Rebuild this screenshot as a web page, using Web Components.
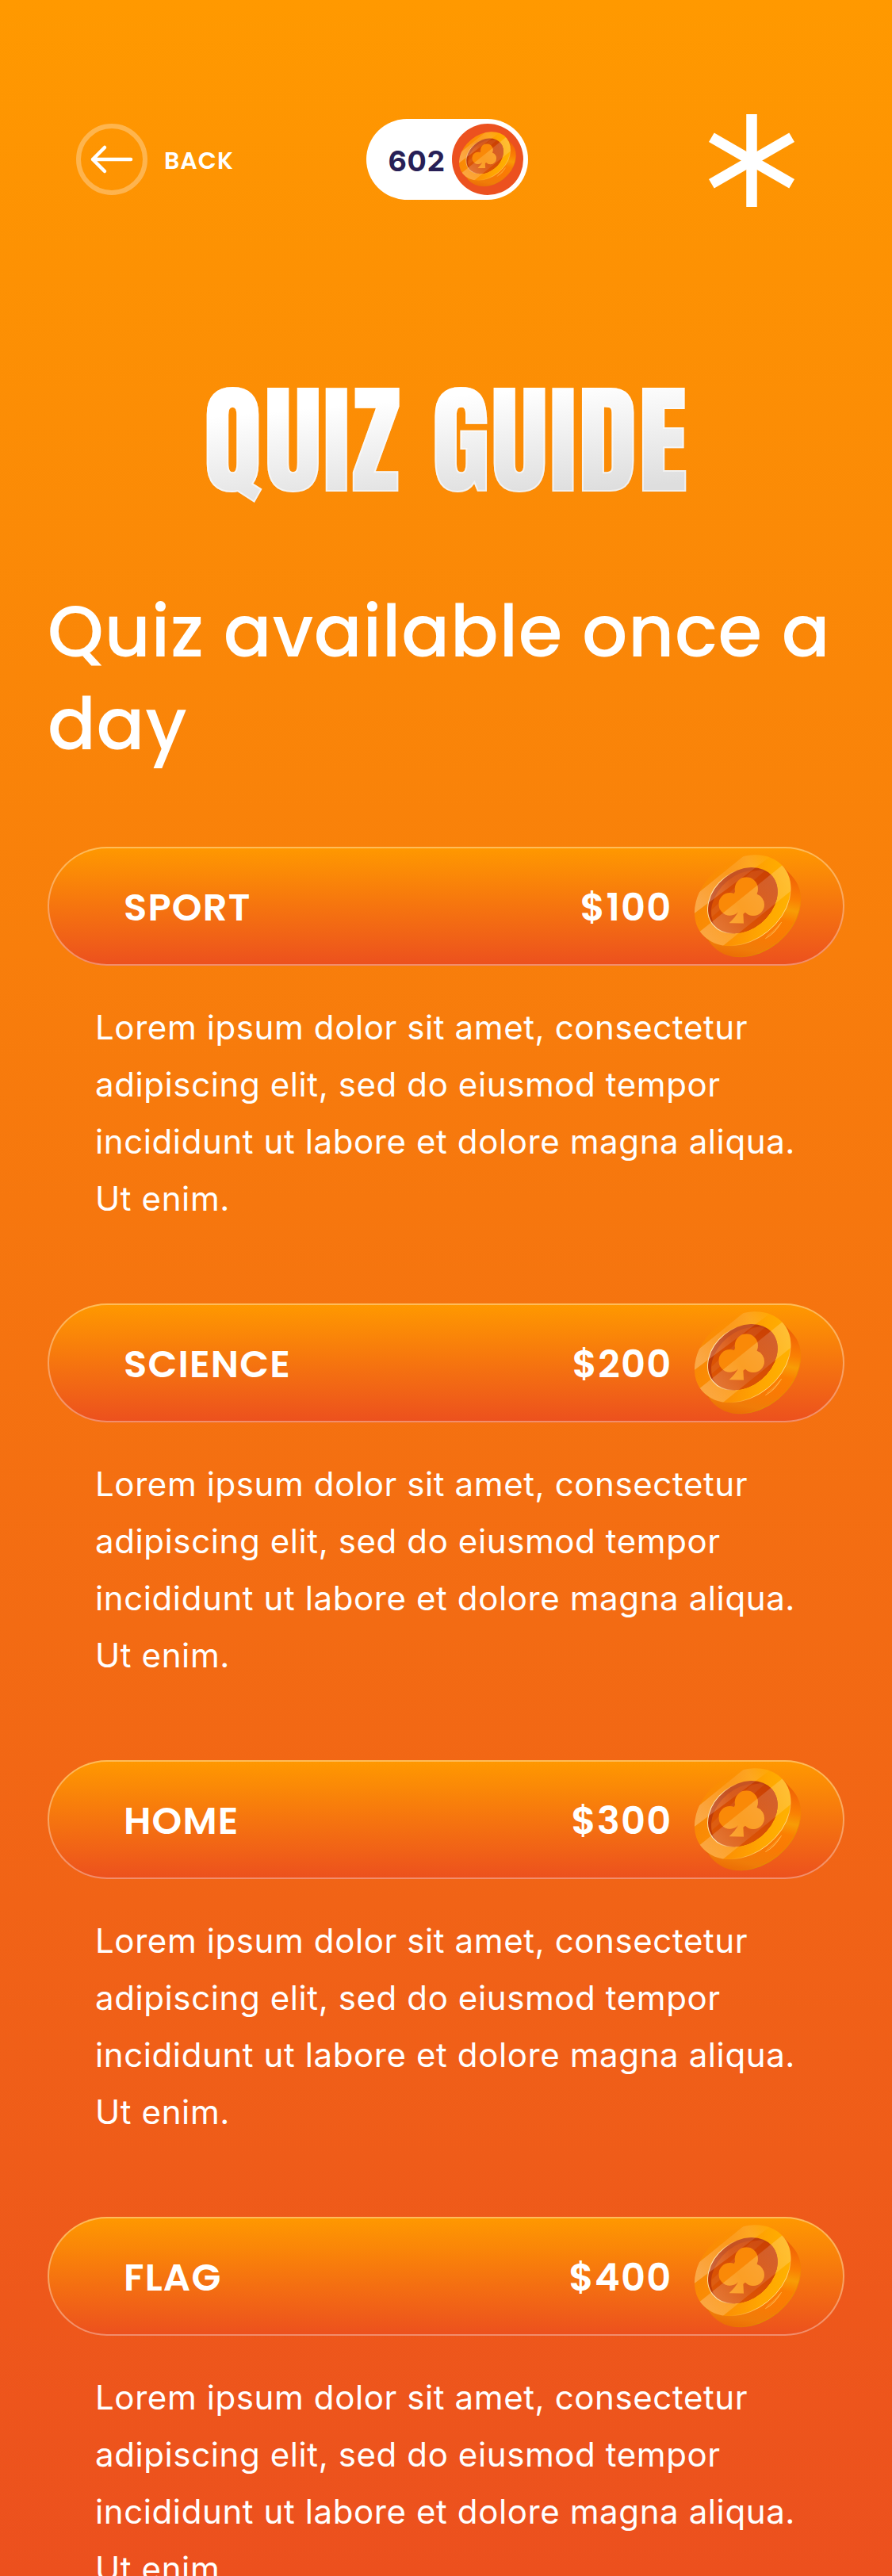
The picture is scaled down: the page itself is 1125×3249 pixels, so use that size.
<!DOCTYPE html>
<html lang="en">
<head>
<meta charset="utf-8">
<title>Quiz Guide</title>
<style>
  html, body { margin: 0; padding: 0; }
  body { font-family: Poppins, "Open Sans", sans-serif; color: #fff; }
</style>
</head>
<body>
<quiz-page>
  <quiz-header slot="header">
    <back-button>BACK</back-button>
    <coin-balance>602</coin-balance>
    <star-mark></star-mark>
  </quiz-header>
  <page-title slot="title">QUIZ GUIDE</page-title>
  <page-lead slot="lead">Quiz available once a day</page-lead>
  <quiz-card name="SPORT" prize="$100">Lorem ipsum dolor sit amet, consectetur adipiscing elit, sed do eiusmod tempor incididunt ut labore et dolore magna aliqua. Ut enim.</quiz-card>
  <quiz-card name="SCIENCE" prize="$200">Lorem ipsum dolor sit amet, consectetur adipiscing elit, sed do eiusmod tempor incididunt ut labore et dolore magna aliqua. Ut enim.</quiz-card>
  <quiz-card name="HOME" prize="$300">Lorem ipsum dolor sit amet, consectetur adipiscing elit, sed do eiusmod tempor incididunt ut labore et dolore magna aliqua. Ut enim.</quiz-card>
  <quiz-card name="FLAG" prize="$400">Lorem ipsum dolor sit amet, consectetur adipiscing elit, sed do eiusmod tempor incididunt ut labore et dolore magna aliqua. Ut enim.</quiz-card>
</quiz-page>
<script>
const define = (name, html, setup) => customElements.define(name, class extends HTMLElement {
  constructor() {
    super();
    this.attachShadow({ mode: 'open' }).innerHTML = html;
  }
  connectedCallback() { if (setup) setup(this); }
});

define('club-coin', `
<style>
  :host { display: block; flex: none; width: 134.67px; height: 129.33px; }
  svg { display: block; width: 100%; height: 100%; overflow: visible; }
</style>
<svg viewBox="48 53 404 388" aria-hidden="true">
  <defs>
    <linearGradient id="rim" gradientUnits="userSpaceOnUse" x1="110" y1="400" x2="440" y2="130">
      <stop offset="0" stop-color="#e96304"/><stop offset=".14" stop-color="#f07c08"/>
      <stop offset=".32" stop-color="#fa7a04"/><stop offset=".46" stop-color="#fb7f02"/>
      <stop offset=".56" stop-color="#f89c05"/><stop offset=".66" stop-color="#fa8003"/>
      <stop offset=".8" stop-color="#f56c05"/><stop offset=".92" stop-color="#ea5f06"/>
      <stop offset="1" stop-color="#e35808"/>
    </linearGradient>
    <linearGradient id="rimEdge" gradientUnits="userSpaceOnUse" x1="120" y1="400" x2="440" y2="150">
      <stop offset="0" stop-color="#e07a00" stop-opacity="0"/><stop offset=".3" stop-color="#e09000"/>
      <stop offset=".75" stop-color="#e88e00"/><stop offset="1" stop-color="#e88000" stop-opacity="0"/>
    </linearGradient>
    <linearGradient id="face" gradientUnits="userSpaceOnUse" x1="90" y1="100" x2="345" y2="350">
      <stop offset="0" stop-color="#f98805"/><stop offset=".4" stop-color="#fc9003"/>
      <stop offset=".75" stop-color="#ffa601"/><stop offset="1" stop-color="#ffb000"/>
    </linearGradient>
    <linearGradient id="well" gradientUnits="userSpaceOnUse" x1="120" y1="260" x2="350" y2="180">
      <stop offset="0" stop-color="#dc5504"/><stop offset=".5" stop-color="#d84e04"/><stop offset="1" stop-color="#cc4203"/>
    </linearGradient>
    <linearGradient id="glossA" gradientUnits="userSpaceOnUse" x1="60" y1="230" x2="340" y2="60">
      <stop offset="0" stop-color="#fff" stop-opacity=".26"/><stop offset=".45" stop-color="#fff" stop-opacity=".1"/>
      <stop offset=".75" stop-color="#fff" stop-opacity=".12"/><stop offset="1" stop-color="#fff" stop-opacity="0"/>
    </linearGradient>
    <linearGradient id="glossB" gradientUnits="userSpaceOnUse" x1="90" y1="370" x2="400" y2="130">
      <stop offset="0" stop-color="#fff" stop-opacity=".24"/><stop offset=".45" stop-color="#fff" stop-opacity=".08"/>
      <stop offset=".8" stop-color="#fff" stop-opacity=".15"/><stop offset="1" stop-color="#fff" stop-opacity=".2"/>
    </linearGradient>
    <linearGradient id="lip" gradientUnits="userSpaceOnUse" x1="150" y1="180" x2="250" y2="270">
      <stop offset="0" stop-color="#ffe0a0"/><stop offset=".5" stop-color="#ffd080" stop-opacity="0"/>
    </linearGradient>
    <linearGradient id="faceEdge" gradientUnits="userSpaceOnUse" x1="180" y1="400" x2="415" y2="170">
      <stop offset="0" stop-color="#ffdf9a" stop-opacity="0"/><stop offset=".35" stop-color="#ffdf9a"/>
      <stop offset=".8" stop-color="#ffdf9a"/><stop offset="1" stop-color="#ffdf9a" stop-opacity="0"/>
    </linearGradient>
    <clipPath id="faceClip"><ellipse cx="230" cy="226" rx="200" ry="151" transform="rotate(-39 230 226)"/></clipPath>
    <clipPath id="wellClip"><ellipse cx="230" cy="226" rx="145" ry="110" transform="rotate(-39 230 226)"/></clipPath>
    <clipPath id="clubClip">
      <circle cx="244" cy="182" r="44"/><circle cx="182" cy="240" r="43"/><circle cx="270" cy="242" r="42"/>
      <path d="M201 192 286 192 275 245 232 277 234 313 179 312Q204 288 213 270L185 230Z"/>
    </clipPath>
  </defs>
  <g fill="url(#rim)">
    <path d="M78.700 356.600 116.700 398.600 419.300 137.400 381.300 95.400Z"/>
    <ellipse cx="268" cy="268" rx="200" ry="151" transform="rotate(-39 268 268)"/>
  </g>
  <path d="M112.600 393.900a200 151 -39 0 0 310.800 -251.800" fill="none" stroke="url(#rimEdge)" stroke-width="3"/>
  <path d="M316 370Q348 352 377 308Q352 352 316 370Z" fill="#ffd98c" stroke="#ffd070" stroke-width="1.500" opacity=".75"/>
  <path d="M322 361Q350 341 372 314" fill="none" stroke="#ffc04a" stroke-width="3" opacity=".5"/>
  <ellipse cx="230" cy="226" rx="200" ry="151" transform="rotate(-39 230 226)" fill="url(#face)"/>
  <g clip-path="url(#wellClip)">
    <rect x="80" y="90" width="300" height="280" fill="#bf3d08"/>
    <ellipse cx="243" cy="237" rx="145" ry="110" transform="rotate(-39 243 237)" fill="url(#well)"/>
    <path d="M112 262 262 118 330 100 112 290Z" fill="#fff" opacity=".06"/>
  </g>
  <ellipse cx="230" cy="226" rx="145" ry="110" transform="rotate(-39 230 226)" fill="none" stroke="url(#lip)" stroke-width="3"/>
  <g clip-path="url(#clubClip)">
    <rect x="130" y="130" width="190" height="190" fill="#fa8907"/>
    <path d="M64 347 384 90 440 140 420 404 148 404Z" fill="#ffb02c" opacity=".32"/>
  </g>
  <g clip-path="url(#faceClip)">
    <path d="M40 215 245 49 345 40 335 60 40 280Z" fill="url(#glossA)"/>
    <path d="M64 347 384 90 440 140 420 184 148 404 90 410Z" fill="url(#glossB)"/>
  </g>
  <path d="M74.600 351.900a200 151 -39 0 0 310.800 -251.800" fill="none" stroke="url(#faceEdge)" stroke-width="2.500"/>
</svg>`);

define('back-button', `
<style>
  :host { display: flex; align-items: center; gap: 21px; font-weight: 600; font-size: 30px; line-height: 45px; letter-spacing: .035em; }
  svg { display: block; width: 90px; height: 90px; }
  span { padding-top: 2px; }
</style>
<svg viewBox="0 0 90 90" fill="none" aria-hidden="true">
  <circle cx="45" cy="45" r="42" stroke="#fff" stroke-opacity=".3" stroke-width="6"/>
  <path d="M69 45H21M36 30 21 45 36 60" stroke="#fff" stroke-width="4.500" stroke-linecap="round" stroke-linejoin="round"/>
</svg>
<span><slot></slot></span>`);

define('coin-balance', `
<style>
  :host { display: flex; align-items: center; justify-content: space-between; box-sizing: border-box; width: 204px; height: 102px;
    padding: 0 6px 0 27.500px; border-radius: 51px; background: #fff; color: #281f56;
    font: 700 36px/44px Inter, sans-serif; letter-spacing: .02em; }
  span { padding-top: 4px; }
  div { display: flex; align-items: center; justify-content: center; width: 90px; height: 90px; border-radius: 50%; background: #ec511f; }
  club-coin { width: 72px; height: 69.200px; }
</style>
<span><slot></slot></span>
<div><club-coin></club-coin></div>`);

define('star-mark', `
<style>
  :host { display: block; width: 108px; height: 117px; }
  svg { display: block; }
</style>
<svg width="108" height="117" viewBox="-54 -58.500 108 117" aria-hidden="true">
  <g stroke="#fff" stroke-width="13.500">
    <path d="M0-58.500V58.500"/><path d="M0-58.500V58.500" transform="rotate(60)"/><path d="M0-58.500V58.500" transform="rotate(-60)"/>
  </g>
</svg>`);

define('quiz-header', `
<style>
  :host { display: grid; grid-template-columns: 1fr auto 1fr; align-items: center; padding: 0 93px 0 96px; }
  ::slotted(star-mark) { justify-self: end; margin: 3px 30px 0 0; }
</style>
<slot></slot>`);

define('page-title', `
<style>
  :host { display: flex; justify-content: center; padding-left: 2px; }
  h1 { margin: 0; font: 400 150px/180px Anton, Impact, sans-serif; letter-spacing: .015em;
    background: linear-gradient(175deg, #fff 22%, #fff 26%, #dedede 84%); -webkit-background-clip: text; background-clip: text;
    color: transparent; -webkit-text-stroke: 2px rgba(255,255,255,.55); white-space: nowrap; }
</style>
<h1><slot></slot></h1>`);

define('page-lead', `
<style>
  :host { display: block; }
  p { margin: 0; font-weight: 500; font-size: 90px; line-height: 117px; letter-spacing: .6px; }
</style>
<p><slot></slot></p>`);

define('quiz-card', `
<style>
  :host { display: flex; flex-direction: column; gap: 42px; }
  .bar { display: flex; align-items: center; box-sizing: border-box; height: 150px; padding: 0 52.300px 0 94px;
    border: 2px solid rgba(255,255,255,.35); border-radius: 75px;
    background: linear-gradient(#ff9900, #ec501e) border-box;
    font-weight: 600; font-size: 48px; line-height: 72px; letter-spacing: .025em; }
  .name { flex: 1; padding-top: 3px; }
  .prize { margin-right: 28.600px; padding-top: 3px; }
  .text { margin: 0; padding: 0 50px 0 60px; font: 400 42px/72px Inter, sans-serif; letter-spacing: .6px; }
</style>
<div class="bar"><span class="name"></span><span class="prize"></span><club-coin></club-coin></div>
<p class="text"><slot></slot></p>`, el => {
  el.shadowRoot.querySelector('.name').textContent = el.getAttribute('name');
  el.shadowRoot.querySelector('.prize').textContent = el.getAttribute('prize');
});

define('quiz-page', `
<style>
  :host { display: flex; flex-direction: column; box-sizing: border-box; height: 3249px; overflow: hidden;
    padding: 141px 0 0; background: linear-gradient(#ff9900, #ec501e); }
  .title { margin-top: 205px; }
  main { display: flex; flex-direction: column; gap: 96px; padding: 0 60px; margin-top: 92px; }
</style>
<slot name="header"></slot>
<div class="title"><slot name="title"></slot></div>
<main><slot name="lead"></slot><slot></slot></main>`);
</script>
</body>
</html>
